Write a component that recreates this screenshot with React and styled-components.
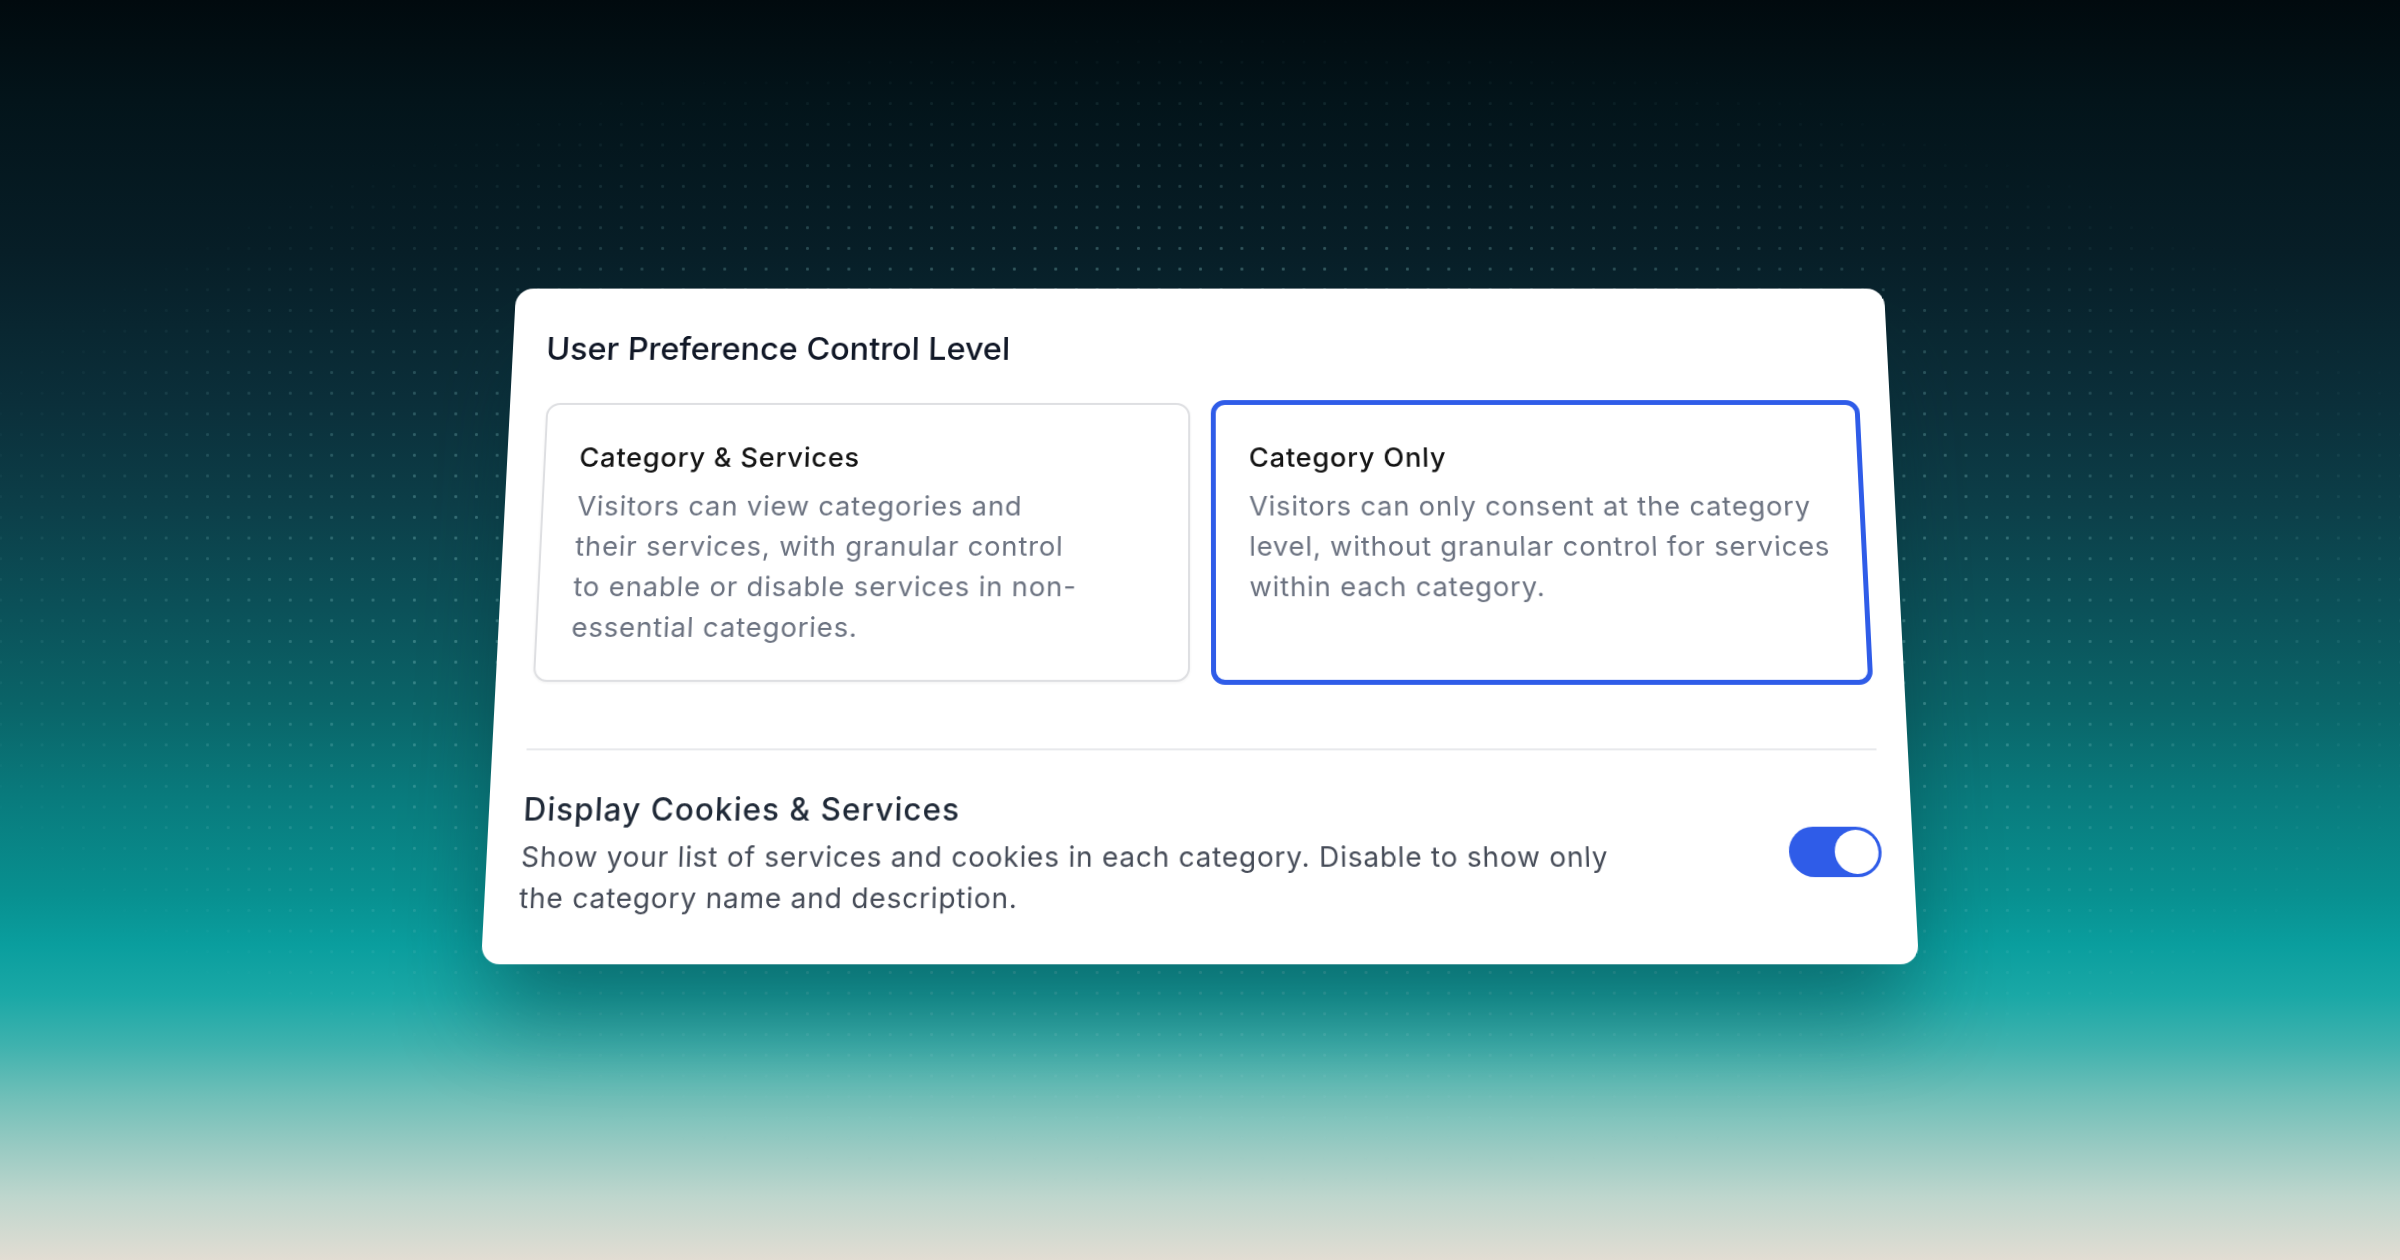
import styled, { createGlobalStyle } from "styled-components";

const GlobalStyle = createGlobalStyle`
  html, body {
    margin: 0;
    padding: 0;
    background: #010a0e;
  }
  * {
    box-sizing: border-box;
  }
`;

export default function App() {
    return (
        <>
            <GlobalStyle />
            <Page>
                <Panel>
                    <Title>User Preference Control Level</Title>

                    <Options>
                        <Option>
                            <OptionTitle>Category &amp; Services</OptionTitle>
                            <OptionText narrow>
                                Visitors can view categories and their services, with granular
                                control to enable or disable services in non-essential categories.
                            </OptionText>
                        </Option>
                        <Option selected>
                            <OptionTitle>Category Only</OptionTitle>
                            <OptionText>
                                Visitors can only consent at the category level, without granular
                                control for services within each category.
                            </OptionText>
                        </Option>
                    </Options>

                    <Divider />

                    <SettingRow>
                        <SettingText>
                            <SettingTitle>Display Cookies &amp; Services</SettingTitle>
                            <SettingDesc>
                                Show your list of services and cookies in each category. Disable to
                                show only the category name and description.
                            </SettingDesc>
                        </SettingText>
                        <Switch role="switch" aria-checked="true" on>
                            <Knob />
                        </Switch>
                    </SettingRow>
                </Panel>
            </Page>
        </>
    );
}

const Page = styled.main`
  position: relative;
  width: 100%;
  height: 1260px;
  overflow: hidden;
  padding-top: 278px;
  display: flex;
  justify-content: center;
  align-items: flex-start;
  background: linear-gradient(
    180deg,
    #010a0e 0%,
    #03141a 8%,
    #071e27 20%,
    #0b2f3a 32%,
    #0c3e48 40%,
    #0b5058 48%,
    #0a6468 56%,
    #097a7c 63%,
    #089090 71%,
    #0a9e9e 75%,
    #1aa8a6 79%,
    #3fb2ae 83%,
    #6fbfb8 87%,
    #98cac2 91%,
    #bed6cd 95%,
    #e2ddd3 100%
  );

  /* dotted grid, fading out towards the edges */
  &::before {
    content: "";
    position: absolute;
    inset: 0;
    pointer-events: none;
    background-image: radial-gradient(
      circle,
      rgba(150, 215, 215, 0.34) 1.2px,
      transparent 1.9px
    );
    background-size: 20.7px 20.7px;
    background-position: 11px 10.5px;
    -webkit-mask-image: radial-gradient(
      ellipse 1320px 580px at 50% 610px,
      #000 55%,
      transparent 100%
    );
    mask-image: radial-gradient(
      ellipse 1320px 580px at 50% 610px,
      #000 55%,
      transparent 100%
    );
  }
`;

const Panel = styled.section`
  position: relative;
  z-index: 1;
  width: 1402px;
  padding: 43px 31px 43.5px 34px;
  background: #ffffff;
  border-radius: 18px;
  font-family: Inter, "Noto Sans", "Liberation Sans", sans-serif;
  transform: perspective(1600px) rotateX(6.75deg);
  box-shadow: 0 55px 90px -10px rgba(0, 45, 50, 0.45);
`;

const Title = styled.h2`
  margin: 0 0 34px;
  font-size: 33px;
  line-height: 40px;
  font-weight: 500;
  color: #111827;
`;

const Options = styled.div`
  display: grid;
  grid-template-columns: 1fr 1fr;
  gap: 18px;
`;

const Option = styled.div`
  margin: ${({ selected }) => (selected ? "0" : "3px")};
  padding: 38px 24px 32px 34px;
  border: ${({ selected }) => (selected ? "5px solid #2f5ce8" : "2px solid #dedfe2")};
  border-radius: 14px;
  background: #fff;
  box-shadow: ${({ selected }) => (selected ? "none" : "0 1px 3px rgba(0,0,0,0.06)")};
`;

const OptionTitle = styled.h3`
  margin: 0;
  font-size: 27.5px;
  line-height: 32px;
  font-weight: 500;
  letter-spacing: 0.8px;
  color: #141414;
`;

const OptionText = styled.p`
  margin: 14px 0 0;
  max-width: ${({ narrow }) => (narrow ? "512px" : "none")};
  font-size: 27.5px;
  line-height: 41px;
  font-weight: 400;
  letter-spacing: 0.85px;
  color: #6b7280;
`;

const Divider = styled.hr`
  margin: 63px 0 0;
  height: 2px;
  border: none;
  background: #e8e9ec;
`;

const SettingRow = styled.div`
  margin-top: 39.5px;
  display: flex;
  align-items: center;
  justify-content: space-between;
`;

const SettingText = styled.div`
  max-width: 1085px;
`;

const SettingTitle = styled.h3`
  margin: 0;
  font-size: 31px;
  line-height: 36px;
  font-weight: 500;
  letter-spacing: 1.05px;
  color: #1f2937;
`;

const SettingDesc = styled.p`
  margin: 8px 0 0;
  font-size: 27.5px;
  line-height: 40.5px;
  font-weight: 400;
  letter-spacing: 0.78px;
  color: #454b57;
`;

const Switch = styled.div`
  flex: none;
  width: 91px;
  height: 49px;
  margin-bottom: 5px;
  padding: 3px;
  border-radius: 999px;
  display: flex;
  justify-content: ${({ on }) => (on ? "flex-end" : "flex-start")};
  background: ${({ on }) => (on ? "#2f5ce8" : "#d1d5db")};
`;

const Knob = styled.span`
  width: 43px;
  height: 43px;
  border-radius: 50%;
  background: #fff;
`;
